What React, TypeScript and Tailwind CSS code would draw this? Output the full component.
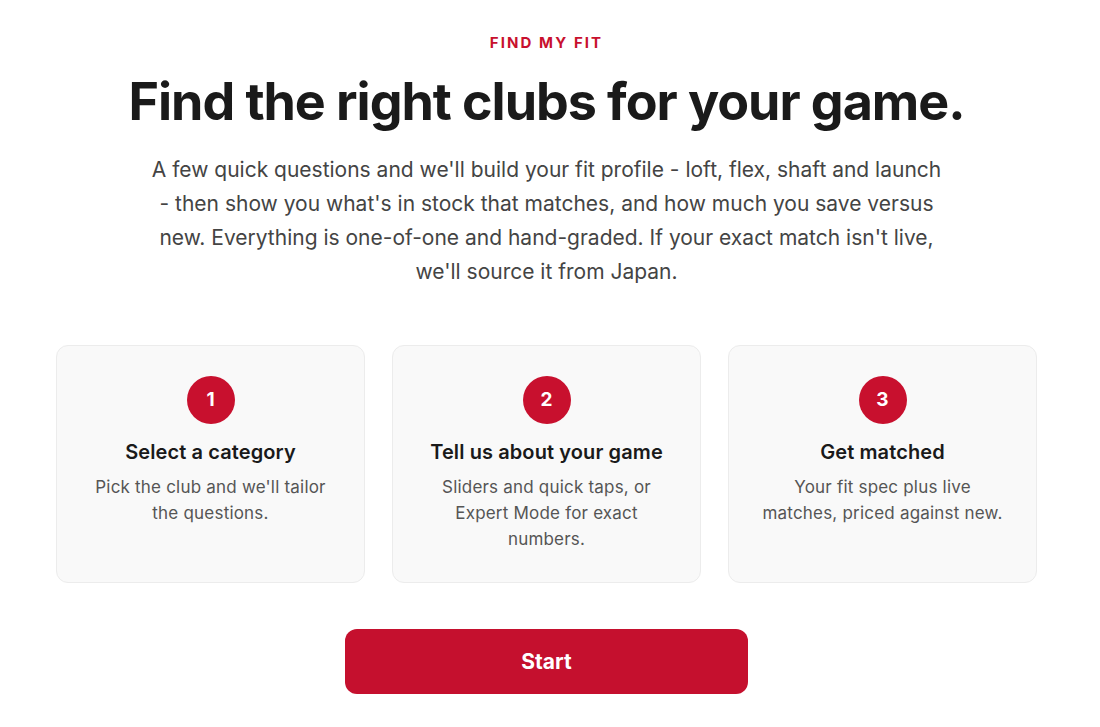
const steps = [
  {
    n: 1,
    title: "Select a category",
    body: "Pick the club and we'll tailor the questions.",
  },
  {
    n: 2,
    title: "Tell us about your game",
    body: "Sliders and quick taps, or Expert Mode for exact numbers.",
  },
  {
    n: 3,
    title: "Get matched",
    body: "Your fit spec plus live matches, priced against new.",
  },
];

export default function App() {
  return (
    <div className="min-h-screen bg-white pr-[7px] font-['Inter','Noto_Sans',sans-serif]">
      <div className="mx-auto flex max-w-[981px] flex-col items-center pt-[33px] pb-[33px]">
        <p className="text-[15px] leading-5 font-bold tracking-[0.14em] text-[#c8102e]">FIND MY FIT</p>
        <h1 className="mt-[20px] text-[52px] leading-[57px] font-bold tracking-[-0.02em] text-[#1a1a1a]">
          Find the right clubs for your game.
        </h1>
        <p className="mt-[23px] max-w-[800px] text-center text-[21px] leading-[34px] text-[#444]">
          A few quick questions and we'll build your fit profile - loft, flex, shaft and launch - then show you
          what's in stock that matches, and how much you save versus new. Everything is one-of-one and
          hand-graded. If your exact match isn't live, we'll source it from Japan.
        </p>

        <div className="mt-[56px] grid w-full grid-cols-3 gap-[27px]">
          {steps.map((s) => (
            <div
              key={s.n}
              className="flex h-[238px] flex-col items-center rounded-xl border border-[#ececec] bg-[#f9f9f9] px-[31px] pt-[30px] text-center"
            >
              <div className="flex h-12 w-12 items-center justify-center rounded-full bg-[#c8102e] text-[19px] font-bold text-white">
                {s.n}
              </div>
              <h3 className="mt-[14px] text-[20px] leading-[28px] font-semibold tracking-[0.005em] text-[#1a1a1a]">
                {s.title}
              </h3>
              <p className="mt-[8px] text-[17px] leading-[26px] tracking-[0.012em] text-[#555]">{s.body}</p>
            </div>
          ))}
        </div>

        <button className="mt-[46px] h-[65px] w-[403px] rounded-xl bg-[#c5102e] text-[21px] font-bold text-white">
          Start
        </button>
      </div>
    </div>
  );
}
